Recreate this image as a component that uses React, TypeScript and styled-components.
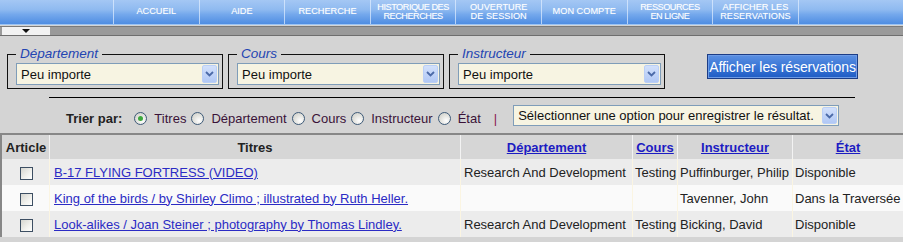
import styled, { createGlobalStyle } from "styled-components";

const GlobalStyle = createGlobalStyle`
  body {
    margin: 0;
    background: #d4d4d4;
    font-family: "Liberation Sans", Arial, sans-serif;
    font-size: 13px;
    color: #222;
  }
`;

const Page = styled.div`
  width: 903px;
`;

const NavBar = styled.div`
  display: flex;
  height: 24px;
  background: linear-gradient(#a4c7f4 0%, #8fbaf0 40%, #74a8ec 60%, #4f8de2 100%);
  border-bottom: 1px solid #9cc4f4;
`;

const NavSpacer = styled.div`
  width: 113px;
`;

const NavItem = styled.a`
  width: 84.6px;
  display: flex;
  flex-direction: column;
  align-items: center;
  justify-content: center;
  border-left: 1px solid rgba(225, 238, 255, 0.7);
  color: #fff;
  font-size: 9.2px;
  line-height: 9.5px;
  text-align: center;
  text-transform: uppercase;
  letter-spacing: ${(p) => (p.$tight ? "-0.5px" : "0")};
  text-shadow: 0 0 1px rgba(255, 255, 255, 0.4);
  cursor: pointer;
  &:last-child {
    border-right: 1px solid rgba(225, 238, 255, 0.7);
  }
`;

const SubBar = styled.div`
  height: 8px;
  padding-left: 2px;
  background: #9a9a9a;
  border-top: 1px solid #7a7a7a;
  border-bottom: 1px solid #6e6e6e;
  margin-top: 1px;
`;

const MenuTab = styled.div`
  width: 48px;
  height: 8px;
  background: #f2f2f2;
  display: flex;
  align-items: center;
  justify-content: center;
`;

const Filters = styled.div`
  display: flex;
  align-items: flex-start;
  gap: 5px;
  padding: 10px 0 0 7px;
`;

const FilterGroup = styled.fieldset`
  margin: 0;
  padding: 1px 3px 3px 8px;
  border: 1px solid #111;
  min-width: 0;
`;

const Legend = styled.legend`
  padding: 0 4px;
  font-size: 13.5px;
  line-height: 16px;
  font-style: italic;
  color: #2344b2;
`;

const FakeSelect = styled.div`
  width: ${(p) => p.$width}px;
  height: ${(p) => p.$height}px;
  box-sizing: border-box;
  display: flex;
  align-items: center;
  justify-content: space-between;
  border: 1px solid #7f9db9;
  background: #f7f4e2;
  color: #111;
  font-size: 13px;
  padding: 1px 1px 1px 4px;
  white-space: nowrap;
`;

const ArrowBox = styled.span`
  width: 15px;
  height: 100%;
  box-sizing: border-box;
  display: flex;
  align-items: center;
  justify-content: center;
  border: 1px solid #bacff6;
  border-radius: 2px;
  background: linear-gradient(#d2e0fb, #b1c8f5);
`;

const ShowButton = styled.button`
  margin: 8px 0 0 37px;
  width: 151px;
  height: 25px;
  padding: 0;
  border: 1px solid #1c3d86;
  box-shadow: inset 0 0 0 1px #6d9be6;
  background: linear-gradient(#5b90e2 0%, #3a76d6 50%, #1f5cc4 100%);
  color: #fff;
  font-family: "Liberation Sans", Arial, sans-serif;
  font-size: 14px;
  white-space: nowrap;
  letter-spacing: -0.1px;
  cursor: pointer;
`;

const Rule = styled.hr`
  margin: 8px 0 0 49px;
  width: 806px;
  height: 0;
  border: 0;
  border-top: 1px solid #000;
`;

const SortRow = styled.div`
  height: 35px;
  display: flex;
  align-items: center;
  padding-left: 66px;
  color: #3a1238;
`;

const SortLabel = styled.span`
  font-weight: bold;
  color: #222;
  margin-right: 12px;
  padding-top: 6px;
`;

const Radio = styled.span`
  width: 13px;
  height: 13px;
  box-sizing: border-box;
  border-radius: 50%;
  border: 1px solid #3d5a78;
  background: radial-gradient(circle at 65% 70%, #ffffff 0%, #e6e6e2 45%, #c9c9c2 100%);
  display: inline-flex;
  align-items: center;
  justify-content: center;
  margin: 6px 7px 0 0;
  &::after {
    content: "";
    width: 5px;
    height: 5px;
    border-radius: 50%;
    background: ${(p) => (p.$checked ? "#3da83d" : "transparent")};
  }
`;

const SortOption = styled.span`
  margin-right: 5px;
  padding-top: 6px;
`;

const Pipe = styled.span`
  color: #8a2050;
  margin: 0 16px 0 8px;
  padding-top: 6px;
`;

const TableFrame = styled.div`
  border-top: 2px solid #878787;
  border-left: 2px solid #878787;
`;

const Table = styled.table`
  width: 901px;
  table-layout: fixed;
  border-collapse: separate;
  border-spacing: 0;
`;

const HeadCell = styled.th`
  height: 24px;
  padding: 0;
  background: #d6d6d6;
  font-weight: bold;
  font-size: 13px;
  color: #222;
  text-align: center;
  border-left: 1px solid ${(p) => (p.$first ? "transparent" : "#f3f3f3")};
  a {
    color: #1c1cc2;
    text-decoration: underline;
  }
`;

const Row = styled.tr`
  background: ${(p) => (p.$odd ? "#ececec" : "#fafafa")};
`;

const Cell = styled.td`
  height: 26px;
  padding: 0 0 0 ${(p) => p.$pad ?? 2}px;
  white-space: nowrap;
  overflow: hidden;
  text-align: ${(p) => (p.$center ? "center" : "left")};
  border-left: 1px solid ${(p) => (p.$first ? "transparent" : "#fbf5e2")};
  vertical-align: middle;
`;

const TitleLink = styled.a`
  color: #2b2bc4;
  text-decoration: underline;
  cursor: pointer;
`;

const CheckBox = styled.span`
  display: inline-block;
  vertical-align: middle;
  width: 13px;
  height: 13px;
  box-sizing: border-box;
  border: 1px solid #3d4f63;
  background: linear-gradient(135deg, #d6d6d0 0%, #f2f2ee 60%, #ffffff 100%);
`;

const Chevron = () => (
  <svg width="9" height="6" viewBox="0 0 9 6">
    <path d="M1 1 L4.5 4.5 L8 1" fill="none" stroke="#4b6aa8" strokeWidth="1.8" />
  </svg>
);

const navItems: { lines: string[]; tight?: boolean }[] = [
  { lines: ["ACCUEIL"] },
  { lines: ["AIDE"] },
  { lines: ["RECHERCHE"] },
  { lines: ["HISTORIQUE DES", "RECHERCHES"], tight: true },
  { lines: ["OUVERTURE", "DE SESSION"] },
  { lines: ["MON COMPTE"] },
  { lines: ["RESSOURCES", "EN LIGNE"], tight: true },
  { lines: ["AFFICHER LES", "RESERVATIONS"] },
];

const filters = ["Département", "Cours", "Instructeur"];

const rows = [
  {
    title: "B-17 FLYING FORTRESS (VIDEO)",
    dept: "Research And Development",
    course: "Testing",
    instr: "Puffinburger, Philip",
    state: "Disponible",
  },
  {
    title: "King of the birds / by Shirley Climo ; illustrated by Ruth Heller.",
    dept: "",
    course: "",
    instr: "Tavenner, John",
    state: "Dans la Traversée",
  },
  {
    title: "Look-alikes / Joan Steiner ; photography by Thomas Lindley.",
    dept: "Research And Development",
    course: "Testing",
    instr: "Bicking, David",
    state: "Disponible",
  },
];

export default function App() {
  return (
    <>
      <GlobalStyle />
      <Page>
        <NavBar>
          <NavSpacer />
          {navItems.map((item) => (
            <NavItem key={item.lines.join(" ")} $tight={item.tight}>
              {item.lines.map((l) => (
                <span key={l}>{l}</span>
              ))}
            </NavItem>
          ))}
        </NavBar>
        <SubBar>
          <MenuTab>
            <svg width="8" height="4" viewBox="0 0 8 4">
              <path d="M0 0 H8 L4 4 Z" fill="#111" />
            </svg>
          </MenuTab>
        </SubBar>

        <Filters>
          {filters.map((f) => (
            <FilterGroup key={f}>
              <Legend>{f}</Legend>
              <FakeSelect $width={203} $height={22}>
                Peu importe
                <ArrowBox>
                  <Chevron />
                </ArrowBox>
              </FakeSelect>
            </FilterGroup>
          ))}
          <ShowButton>Afficher les réservations</ShowButton>
        </Filters>

        <Rule />

        <SortRow>
          <SortLabel>Trier par:</SortLabel>
          <Radio $checked />
          <SortOption>Titres</SortOption>
          <Radio />
          <SortOption>Département</SortOption>
          <Radio />
          <SortOption>Cours</SortOption>
          <Radio />
          <SortOption>Instructeur</SortOption>
          <Radio />
          <SortOption>État</SortOption>
          <Pipe>|</Pipe>
          <FakeSelect $width={326} $height={21}>
            Sélectionner une option pour enregistrer le résultat.
            <ArrowBox>
              <Chevron />
            </ArrowBox>
          </FakeSelect>
        </SortRow>

        <TableFrame>
          <Table>
            <colgroup>
              <col style={{ width: 47 }} />
              <col style={{ width: 411 }} />
              <col style={{ width: 172 }} />
              <col style={{ width: 45 }} />
              <col style={{ width: 115 }} />
              <col style={{ width: 111 }} />
            </colgroup>
            <thead>
              <tr>
                <HeadCell $first>Article</HeadCell>
                <HeadCell>Titres</HeadCell>
                <HeadCell>
                  <a>Département</a>
                </HeadCell>
                <HeadCell>
                  <a>Cours</a>
                </HeadCell>
                <HeadCell>
                  <a>Instructeur</a>
                </HeadCell>
                <HeadCell>
                  <a>État</a>
                </HeadCell>
              </tr>
            </thead>
            <tbody>
              {rows.map((r, i) => (
                <Row key={r.title} $odd={i % 2 === 0}>
                  <Cell $first $center $pad={0}>
                    <CheckBox />
                  </Cell>
                  <Cell $pad={4}>
                    <TitleLink>{r.title}</TitleLink>
                  </Cell>
                  <Cell $pad={3}>{r.dept}</Cell>
                  <Cell>{r.course}</Cell>
                  <Cell>{r.instr}</Cell>
                  <Cell>{r.state}</Cell>
                </Row>
              ))}
            </tbody>
          </Table>
        </TableFrame>
      </Page>
    </>
  );
}
